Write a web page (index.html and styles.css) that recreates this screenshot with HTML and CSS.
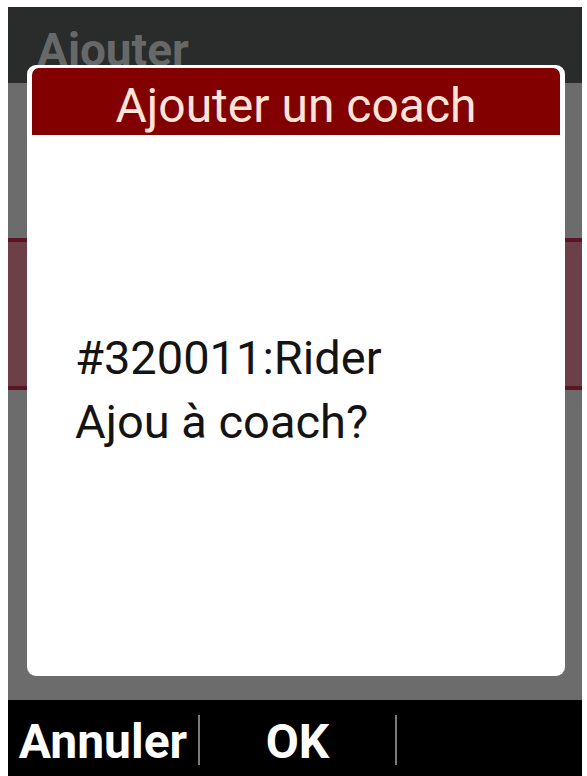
FILE: index.html
```html
<!DOCTYPE html>
<html lang="fr">
<head>
<meta charset="utf-8">
<title>Ajouter un coach</title>
<link rel="stylesheet" href="styles.css">
</head>
<body>
<div class="screen">
  <div class="header">Ajouter</div>
  <div class="content">
    <div class="band"></div>
  </div>
  <div class="softbar">
    <div class="softkey left">Annuler</div>
    <div class="sep"></div>
    <div class="softkey mid">OK</div>
    <div class="sep"></div>
    <div class="softkey right"></div>
  </div>
  <div class="dialog">
    <div class="dialog-title">Ajouter un coach</div>
    <div class="dialog-body">
      <div class="line">#320011:Rider</div>
      <div class="line">Ajou à coach?</div>
    </div>
  </div>
</div>
</body>
</html>
```

FILE: styles.css
```css
html, body {
  margin: 0;
  padding: 0;
  background: #ffffff;
}
body {
  font-family: Roboto, "Noto Sans", sans-serif;
}
.screen {
  position: relative;
  margin: 7px 0 0 8px;
  width: 574px;
  height: 769px;
  display: flex;
  flex-direction: column;
  overflow: hidden;
}
.header {
  height: 56px;
  padding: 20px 0 0 29px;
  background: #2a2b2b;
  color: #676868;
  font-weight: 700;
  font-size: 46px;
  line-height: 46px;
  overflow: hidden;
}
.content {
  flex: 1;
  background: #6c6c6c;
  padding-top: 155px;
}
.band {
  height: 144px;
  background: #6b4047;
  border-top: 4px solid #5a1626;
  border-bottom: 4px solid #5a1626;
}
.softbar {
  height: 76px;
  background: #000000;
  display: flex;
  align-items: center;
}
.softkey {
  color: #ffffff;
  font-weight: 700;
  font-size: 48px;
  line-height: 48px;
  text-align: center;
  padding-top: 8px;
}
.softkey.left { width: 190px; }
.softkey.mid { width: 195px; }
.softkey.right { flex: 1; }
.sep {
  width: 2px;
  height: 50px;
  margin-top: 4px;
  background: #7a7a7a;
}
.dialog {
  position: absolute;
  left: 19px;
  top: 58px;
  width: 528px;
  height: 608px;
  padding: 3px 5px 0 5px;
  background: #ffffff;
  border-radius: 9px;
}
.dialog-title {
  height: 59px;
  padding-top: 8px;
  background: #820000;
  border-radius: 7px 7px 0 0;
  color: #ffe4da;
  font-size: 48px;
  line-height: 59px;
  text-align: center;
}
.dialog-body {
  padding: 191px 0 0 43px;
  color: #141414;
  font-size: 47px;
  line-height: 64px;
}
```
